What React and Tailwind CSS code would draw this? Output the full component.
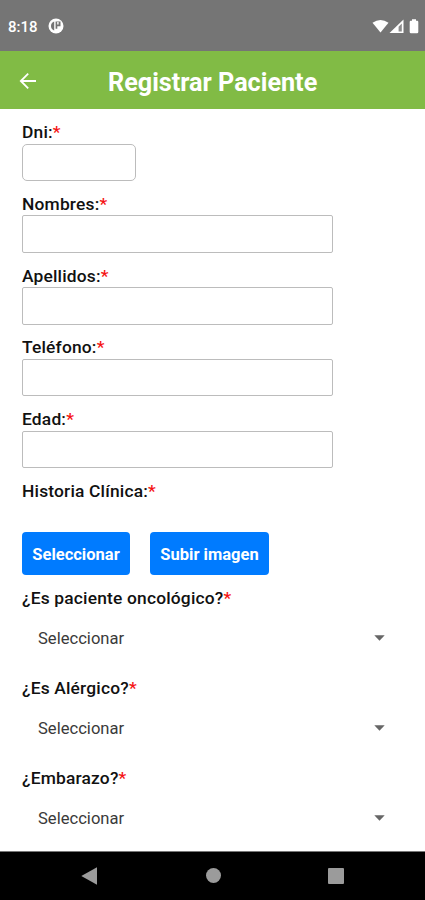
const textFields = [
  { label: 'Dni:', box: 'w-[113.5px] rounded-[5px]' },
  { label: 'Nombres:', box: 'w-[310.5px] rounded-[2px]' },
  { label: 'Apellidos:', box: 'w-[310.5px] rounded-[2px]' },
  { label: 'Teléfono:', box: 'w-[310.5px] rounded-[2px]' },
  { label: 'Edad:', box: 'w-[310.5px] rounded-[2px]' },
];

const selects = ['¿Es paciente oncológico?', '¿Es Alérgico?', '¿Embarazo?'];

function Label({ children }) {
  return (
    <div className="h-[21.5px] shrink-0 text-[17.4px] leading-[21.5px] font-medium tracking-[0.18px] whitespace-nowrap text-[#111]">
      {children}
      <span className="text-[#f51414]">*</span>
    </div>
  );
}

function StatusBar() {
  return (
    <div className="flex h-[51px] shrink-0 items-center bg-[#757575] pl-[8px] pr-[6px] pt-[2px] text-white">
      <span className="text-[15px] leading-5 font-medium">8:18</span>
      <svg className="ml-[10px] -mt-px h-4 w-4" viewBox="0 0 16 16">
        <circle cx="8" cy="8" r="7.5" fill="#fff" />
        <path d="M6.2 3.4A4.9 4.9 0 0 0 6.2 12.6Z" fill="#757575" />
        <path d="M7.6 3.5h4.9v4.7H9.3v2.6H7.6Z" fill="#757575" />
        <path d="M9.2 3.9h1.4v2.6H9.2Z" fill="#fff" />
      </svg>
      <div className="ml-auto flex items-center">
        <svg className="h-[15px] w-[17px]" viewBox="0 0 17 15">
          <path d="M0.5 3.8Q8.5-2 16.5 3.8L8.5 13.6Z" fill="#fff" />
        </svg>
        <svg className="h-[15px] w-[15px]" viewBox="0 0 15 15">
          <path d="M14.5 0.5V14H0.5Z" fill="#fff" />
          <path d="M12.8 4.5V12.5H9.6V7.7Z" fill="#8c8c8c" />
        </svg>
        <svg className="ml-[5px] h-[15px] w-[10px]" viewBox="0 0 10 15">
          <path d="M3 0.3h4V1.8h1.2Q9.3 1.8 9.3 3V13Q9.3 14.3 8 14.3H2Q0.7 14.3 0.7 13V3Q0.7 1.8 1.8 1.8H3Z" fill="#fff" />
        </svg>
      </div>
    </div>
  );
}

function Header() {
  return (
    <header className="flex h-[58px] shrink-0 items-center bg-[#81bb45] text-white">
      <svg className="ml-[19px] mt-px h-[18px] w-[18px]" viewBox="0 0 18 18" fill="none" stroke="#fff" strokeWidth="1.8">
        <path d="M17 9H2M9.2 1.6 1.8 9l7.4 7.4" />
      </svg>
      <h1 className="ml-[71px] mt-[5px] text-[25.2px] leading-7 font-bold whitespace-nowrap">Registrar Paciente</h1>
    </header>
  );
}

function Form() {
  return (
    <main className="flex min-h-0 flex-1 flex-col bg-white px-[22px] pt-[13px]">
      {textFields.map((field) => (
        <div key={field.label} className="h-[71.75px] shrink-0">
          <Label>{field.label}</Label>
          <div className={`h-[37.5px] border border-[#bcbcbc] ${field.box}`} />
        </div>
      ))}
      <Label>Historia Clínica:</Label>
      <div className="mt-[30px] flex shrink-0 gap-[20px]">
        <button className="h-[43px] w-[108px] rounded-[4px] bg-[#007bff] pt-[3px] text-[16.5px] font-bold whitespace-nowrap text-white">Seleccionar</button>
        <button className="h-[43px] w-[119px] rounded-[4px] bg-[#007bff] pt-[3px] text-[16.5px] font-bold whitespace-nowrap text-white">Subir imagen</button>
      </div>
      <div className="mt-[12.5px] shrink-0">
        {selects.map((label) => (
          <div key={label} className="h-[90px]">
            <Label>{label}</Label>
            <div className="flex h-[60px] items-center justify-between pl-[16px] pr-[18px] text-[16.6px] text-[#3a3a3a]">
              <span>Seleccionar</span>
              <svg className="-mt-[3px] h-[6px] w-[11px]" viewBox="0 0 11 6">
                <path d="M0.3 0.3h10.4L5.5 5.7Z" fill="#666" />
              </svg>
            </div>
          </div>
        ))}
      </div>
    </main>
  );
}

function NavBar() {
  return (
    <nav className="flex h-[49px] shrink-0 items-center border-t border-[#777] bg-black pl-[81px] pb-px">
      <svg className="h-[18px] w-[16px]" viewBox="0 0 16 18">
        <path d="M0.3 9 16 0.2V17.8Z" fill="#9b9b9b" />
      </svg>
      <div className="ml-[108.5px] h-[15px] w-[15px] rounded-full bg-[#9b9b9b]" />
      <div className="ml-[107px] h-[16px] w-[16px] rounded-[1px] bg-[#9b9b9b]" />
    </nav>
  );
}

export default function App() {
  return (
    <div className="flex h-[900px] w-[425px] flex-col overflow-hidden bg-white font-['Roboto',sans-serif]">
      <StatusBar />
      <Header />
      <Form />
      <NavBar />
    </div>
  );
}
